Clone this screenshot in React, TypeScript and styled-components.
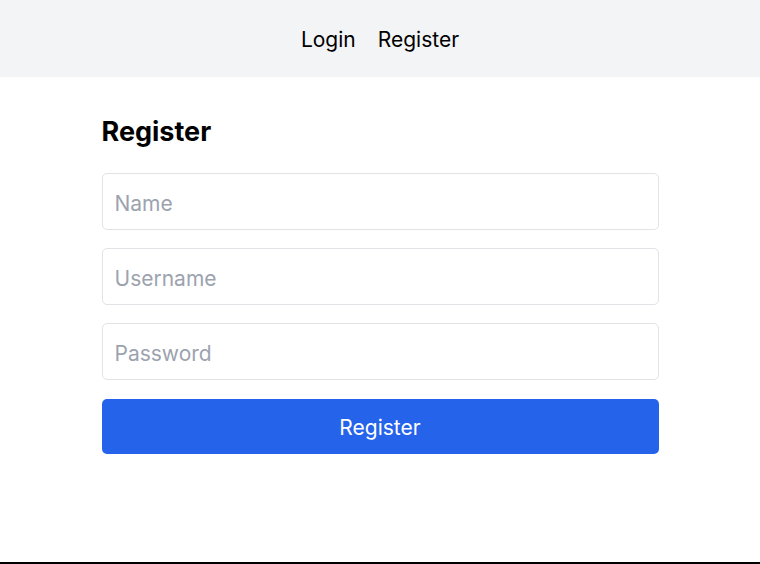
import styled, { createGlobalStyle } from 'styled-components';

const GlobalStyle = createGlobalStyle`
  * { box-sizing: border-box; }
  body {
    margin: 0;
    font-family: Inter, "Noto Sans", "Liberation Sans", sans-serif;
    color: #000;
    background: #fff;
  }
`

const Page = styled.div`
  min-height: 100vh;
  display: flex;
  flex-direction: column;
  border-bottom: 2px solid #000;
`

const Nav = styled.nav`
  height: 77px;
  background: #f3f4f6;
  display: flex;
  align-items: center;
  justify-content: center;
  gap: 22px;
  padding-top: 2px;
`

const NavLink = styled.a`
  font-size: 21px;
  color: #000;
  text-decoration: none;
  cursor: pointer;
`

const Main = styled.main`
  width: 557px;
  margin: 0 auto;
  padding-top: 38px;
`

const Title = styled.h2`
  margin: 0 0 24px;
  font-size: 27px;
  font-weight: 700;
  line-height: 34px;
`

const Form = styled.form`
  display: flex;
  flex-direction: column;
  gap: 18px;
`

const Input = styled.input`
  width: 100%;
  height: 57px;
  padding: 3px 12px 0;
  border: 1px solid #e2e3e6;
  border-radius: 5px;
  font-family: inherit;
  font-size: 21px;
  color: #111;
  outline: none;

  &::placeholder {
    color: #9ca3af;
  }
`

const Button = styled.button`
  height: 55px;
  margin-top: 1px;
  padding-top: 2px;
  border: none;
  border-radius: 5px;
  background: #2563eb;
  color: #fff;
  font-family: inherit;
  font-size: 21px;
  cursor: pointer;
`

export default function App() {
  return (
    <>
      <GlobalStyle />
      <Page>
        <Nav>
          <NavLink>Login</NavLink>
          <NavLink>Register</NavLink>
        </Nav>
        <Main>
          <Title>Register</Title>
          <Form onSubmit={e => e.preventDefault()}>
            <Input placeholder="Name" />
            <Input placeholder="Username" />
            <Input type="password" placeholder="Password" />
            <Button type="submit">Register</Button>
          </Form>
        </Main>
      </Page>
    </>
  );
}
